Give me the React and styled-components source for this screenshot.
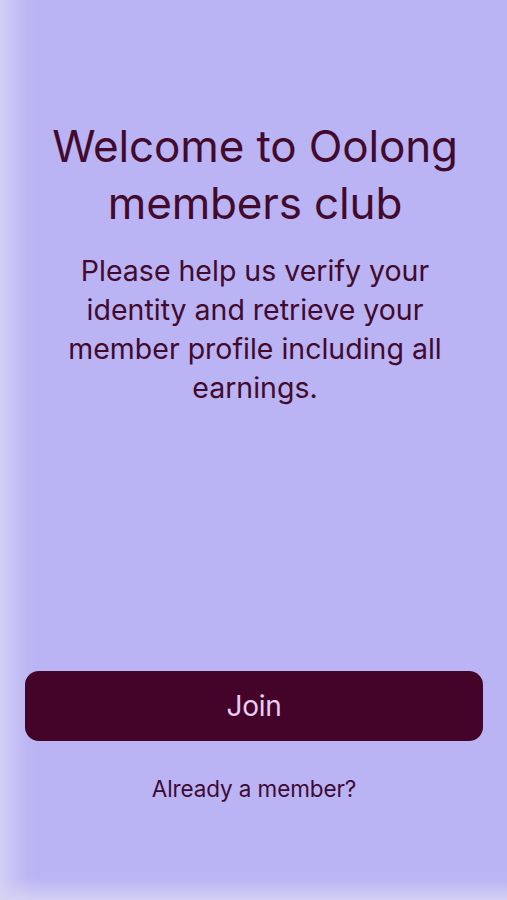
import React from "react";
import styled, { createGlobalStyle } from "styled-components";

const GlobalStyle = createGlobalStyle`
    html, body {
        margin: 0;
        padding: 0;
        background: #bab3f4;
    }
    * {
        box-sizing: border-box;
    }
`;

export default function App() {
    return (
        <Screen>
            <GlobalStyle />
            <Intro>
                <Title>Welcome to Oolong members club</Title>
                <Lead>
                    Please help us verify your identity and retrieve your member
                    profile including all earnings.
                </Lead>
            </Intro>
            <Actions>
                <JoinButton type="button">Join</JoinButton>
                <MemberLink href="#">Already a member?</MemberLink>
            </Actions>
        </Screen>
    );
}

const Screen = styled.div`
    height: 900px;
    display: flex;
    flex-direction: column;
    font-family: Inter, "Liberation Sans", sans-serif;
    color: #420a2d;
    background:
        linear-gradient(to top, rgba(214, 211, 244, 0.9) 0, rgba(214, 211, 244, 0) 22px),
        linear-gradient(to right, #d2cff3 0, #c6c1f4 14px, #bdb6f4 28px, #bab3f4 44px);
`;

const Intro = styled.div`
    padding: 118px 40px 0 43px;
    display: flex;
    flex-direction: column;
    align-items: center;
    text-align: center;
`;

const Title = styled.h1`
    margin: 0;
    font-size: 44px;
    line-height: 57px;
    font-weight: 400;
    letter-spacing: -0.15px;
    max-width: 420px;
`;

const Lead = styled.p`
    margin: 19px 0 0;
    font-size: 28.5px;
    line-height: 39px;
    font-weight: 400;
    letter-spacing: 0;
    max-width: 400px;
`;

const Actions = styled.div`
    margin-top: auto;
    padding: 0 24px 98px 25px;
    display: flex;
    flex-direction: column;
    align-items: center;
    gap: 34px;
`;

const JoinButton = styled.button`
    width: 100%;
    height: 70px;
    border: none;
    border-radius: 14px;
    background: #44042a;
    color: #eacdf2;
    font-family: inherit;
    font-size: 28px;
    letter-spacing: -0.3px;
    cursor: pointer;
`;

const MemberLink = styled.a`
    font-size: 22.5px;
    letter-spacing: -0.1px;
    color: #3e0a34;
    text-decoration: none;
`;
